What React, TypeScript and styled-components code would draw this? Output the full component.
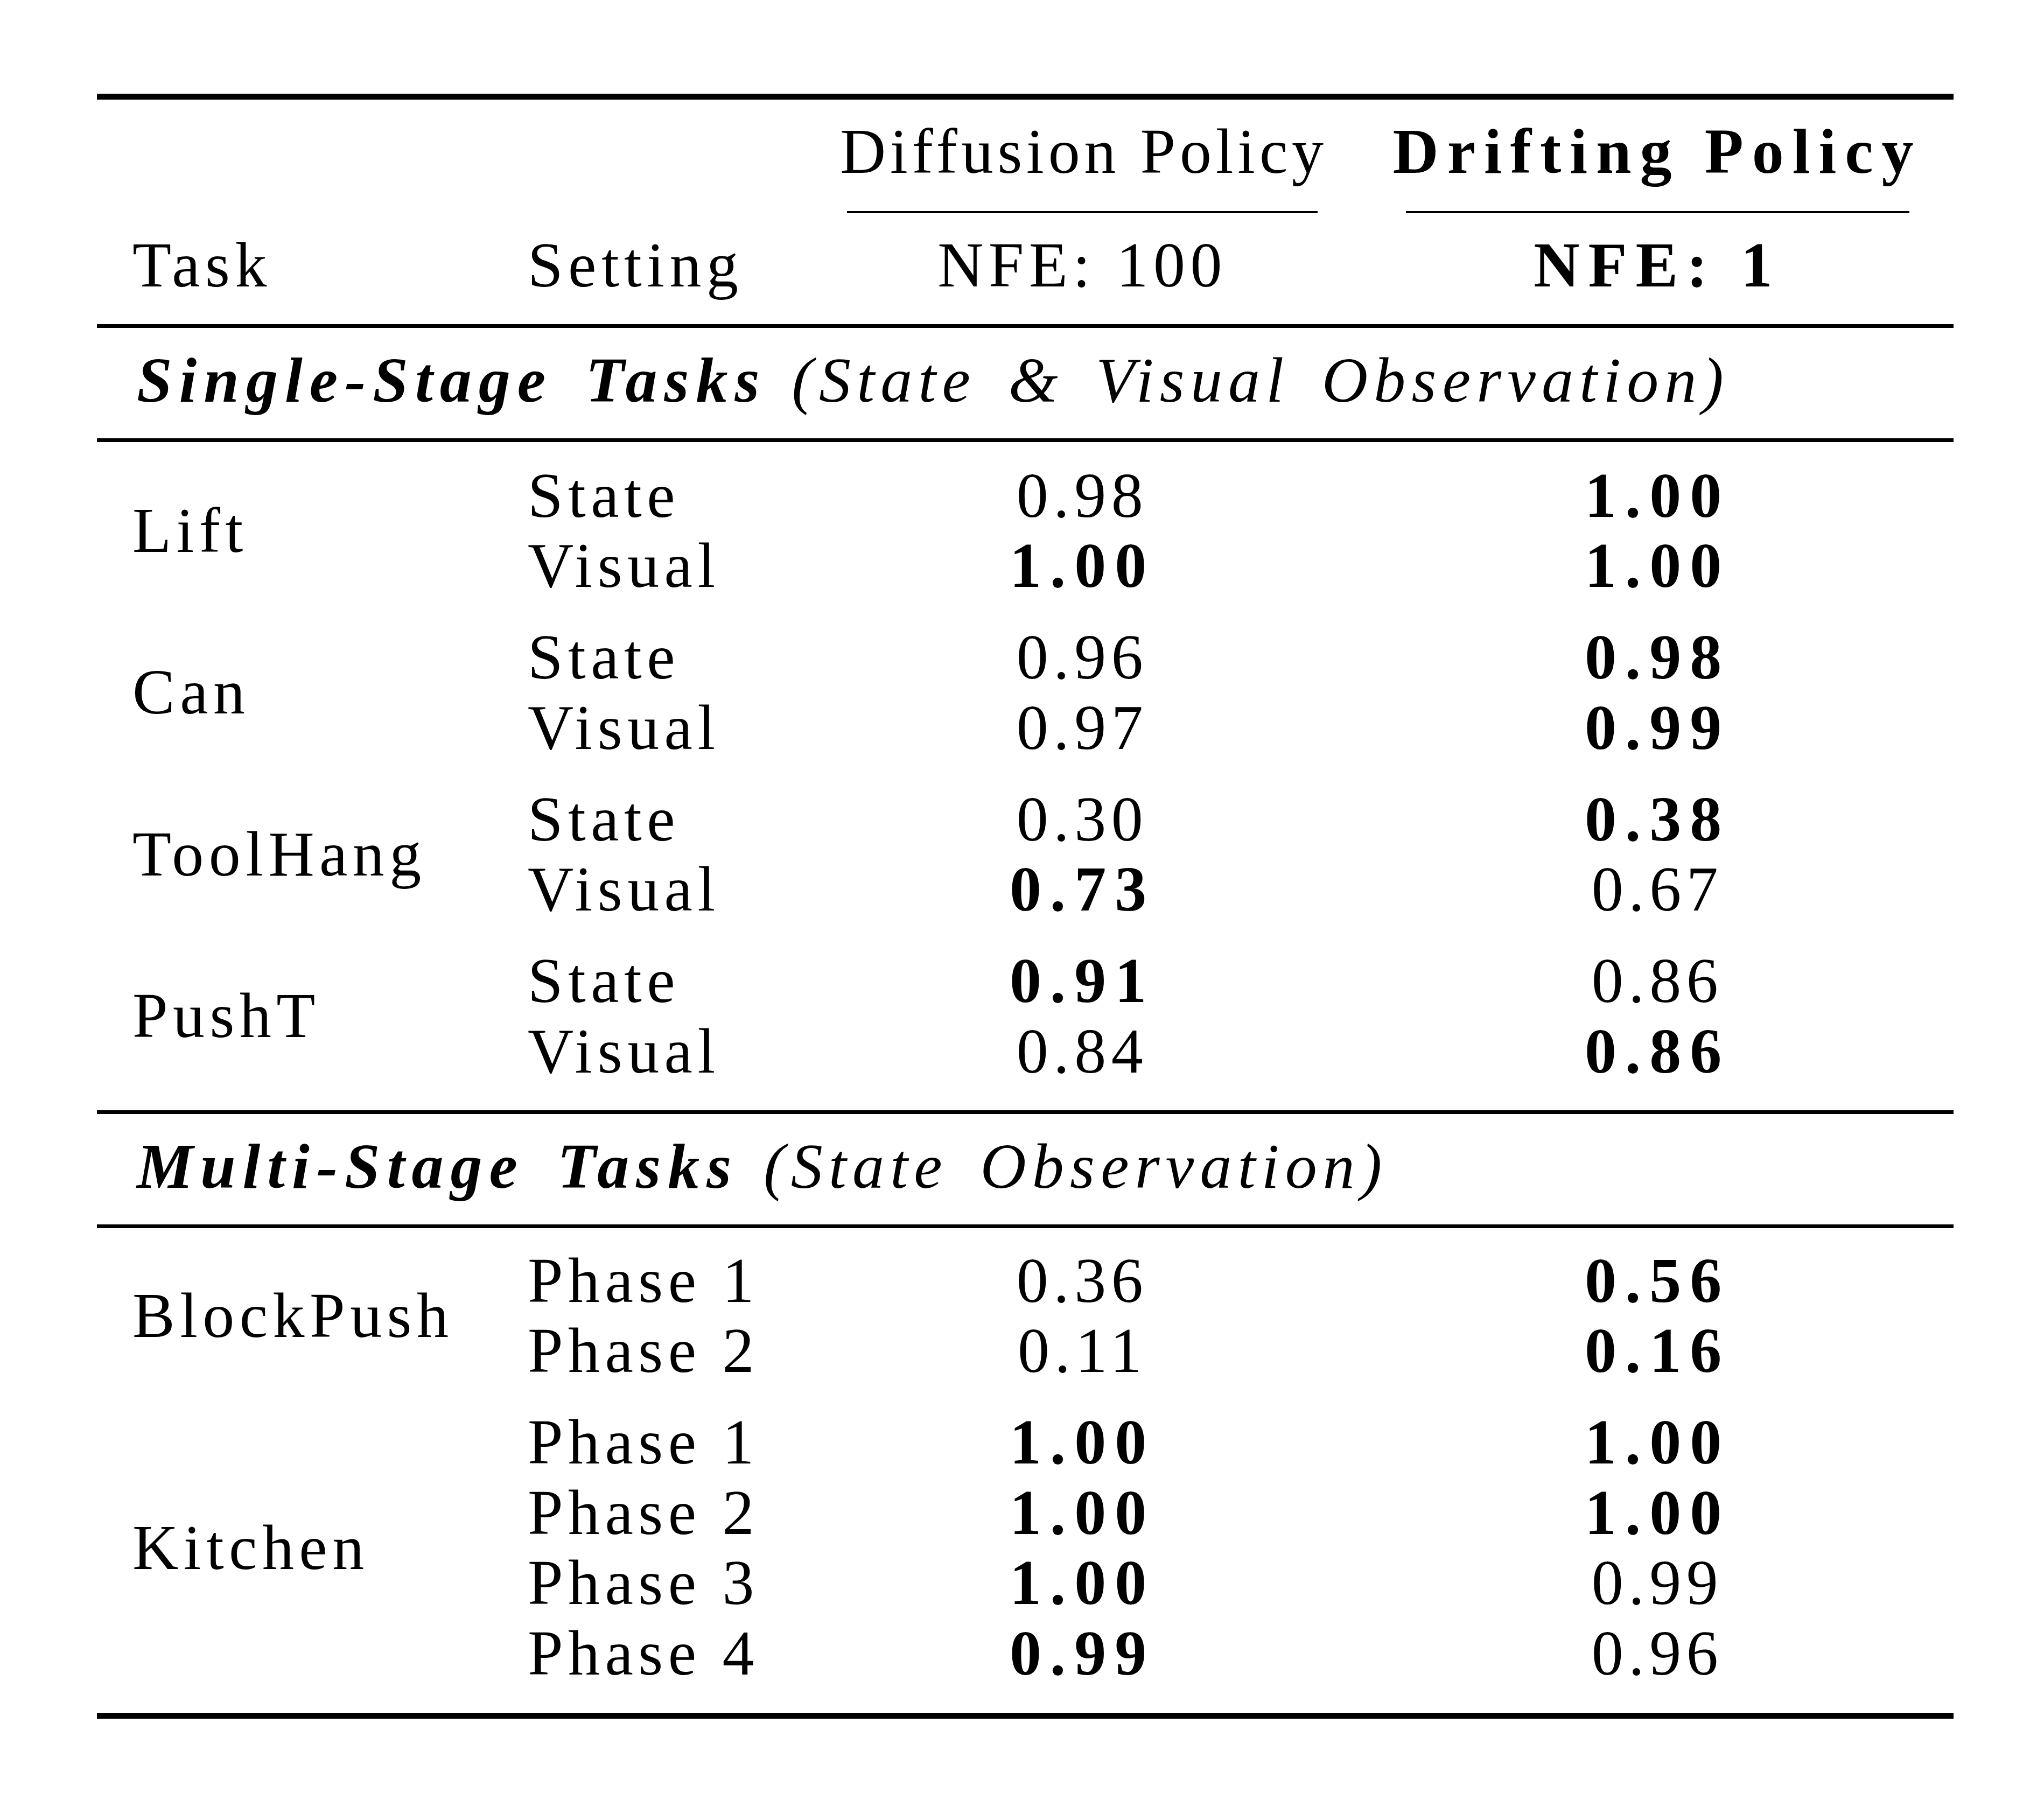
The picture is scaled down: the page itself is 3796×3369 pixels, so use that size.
import React from "react";
import styled, { createGlobalStyle } from "styled-components";

const GlobalStyle = createGlobalStyle`
  html, body {
    margin: 0;
    padding: 0;
    background: #ffffff;
  }
  body {
    font-family: "Liberation Serif", "Times New Roman", serif;
    color: #000000;
  }
`;

const Page = styled.div`
  width: 3796px;
  height: 3369px;
  box-sizing: border-box;
  padding: 174px 0 0 180px;
  background: #ffffff;
`;

const Table = styled.div`
  width: 3448px;
  font-size: 118px;
  line-height: 130.5px;
  letter-spacing: 0.08em;
`;

const Rule = styled.div<{ $heavy?: boolean }>`
  height: ${(p) => (p.$heavy ? 11 : 7)}px;
  background: #000000;
`;

const Block = styled.div<{ $top: number; $bottom: number }>`
  display: grid;
  grid-template-columns: 800px 580px 900px 1168px;
  grid-auto-rows: auto;
  padding: ${(p) => p.$top}px 0 ${(p) => p.$bottom}px;
`;

const Blank = styled.span``;

const TaskCell = styled.div<{ $rows: number }>`
  grid-column: 1;
  grid-row: span ${(p) => p.$rows};
  align-self: center;
  padding-left: 66px;
  white-space: nowrap;
`;

const SettingCell = styled.div`
  grid-column: 2;
  white-space: nowrap;
`;

const NumCell = styled.div<{ $bold?: boolean; $drift?: boolean }>`
  text-align: center;
  white-space: nowrap;
  padding-left: ${(p) => (p.$drift ? 68 : 0)}px;
  font-weight: ${(p) => (p.$bold ? 700 : 400)};
  letter-spacing: ${(p) => (p.$bold ? "0.135em" : "0.08em")};
`;

const HeadCell = styled(NumCell)`
  letter-spacing: ${(p) => (p.$bold ? "0.135em" : "0.066em")};
`;

const CMidRule = styled.div<{ $drift?: boolean }>`
  height: 4px;
  background: #000000;
  margin: 44px ${(p) => (p.$drift ? 82 : 13)}px 32px
    ${(p) => (p.$drift ? 151 : 13)}px;
`;

const GroupGap = styled.div`
  grid-column: 1 / -1;
  height: 39.5px;
`;

const SectionRow = styled.div`
  padding: 33px 0 41.5px 74px;
  white-space: nowrap;
  word-spacing: 0.16em;
`;

const SectionTitle = styled.span`
  font-style: italic;
  font-weight: 700;
  letter-spacing: 0.11em;
`;

const SectionNote = styled.span`
  font-style: italic;
  letter-spacing: 0.095em;
  margin-left: 0.4em;
`;

type Row = { setting: string; diffusion: string; drifting: string; best: "d" | "f" | "both" };
type Group = { task: string; rows: Row[] };

const single: Group[] = [
  {
    task: "Lift",
    rows: [
      { setting: "State", diffusion: "0.98", drifting: "1.00", best: "f" },
      { setting: "Visual", diffusion: "1.00", drifting: "1.00", best: "both" },
    ],
  },
  {
    task: "Can",
    rows: [
      { setting: "State", diffusion: "0.96", drifting: "0.98", best: "f" },
      { setting: "Visual", diffusion: "0.97", drifting: "0.99", best: "f" },
    ],
  },
  {
    task: "ToolHang",
    rows: [
      { setting: "State", diffusion: "0.30", drifting: "0.38", best: "f" },
      { setting: "Visual", diffusion: "0.73", drifting: "0.67", best: "d" },
    ],
  },
  {
    task: "PushT",
    rows: [
      { setting: "State", diffusion: "0.91", drifting: "0.86", best: "d" },
      { setting: "Visual", diffusion: "0.84", drifting: "0.86", best: "f" },
    ],
  },
];

const multi: Group[] = [
  {
    task: "BlockPush",
    rows: [
      { setting: "Phase 1", diffusion: "0.36", drifting: "0.56", best: "f" },
      { setting: "Phase 2", diffusion: "0.11", drifting: "0.16", best: "f" },
    ],
  },
  {
    task: "Kitchen",
    rows: [
      { setting: "Phase 1", diffusion: "1.00", drifting: "1.00", best: "both" },
      { setting: "Phase 2", diffusion: "1.00", drifting: "1.00", best: "both" },
      { setting: "Phase 3", diffusion: "1.00", drifting: "0.99", best: "d" },
      { setting: "Phase 4", diffusion: "0.99", drifting: "0.96", best: "d" },
    ],
  },
];

function Groups({ groups, top, bottom }: { groups: Group[]; top: number; bottom: number }) {
  return (
    <Block $top={top} $bottom={bottom}>
      {groups.map((g, gi) => (
        <React.Fragment key={g.task}>
          {gi > 0 && <GroupGap />}
          <TaskCell $rows={g.rows.length}>{g.task}</TaskCell>
          {g.rows.map((r) => (
            <React.Fragment key={r.setting}>
              <SettingCell>{r.setting}</SettingCell>
              <NumCell $bold={r.best !== "f"}>{r.diffusion}</NumCell>
              <NumCell $drift $bold={r.best !== "d"}>
                {r.drifting}
              </NumCell>
            </React.Fragment>
          ))}
        </React.Fragment>
      ))}
    </Block>
  );
}

export default function App() {
  return (
    <Page>
      <GlobalStyle />
      <Table>
        <Rule $heavy />
        <Block $top={32} $bottom={43.5}>
          <Blank />
          <Blank />
          <HeadCell>Diffusion Policy</HeadCell>
          <HeadCell $drift $bold>
            Drifting Policy
          </HeadCell>
          <Blank />
          <Blank />
          <CMidRule />
          <CMidRule $drift />
          <TaskCell $rows={1}>Task</TaskCell>
          <SettingCell>Setting</SettingCell>
          <NumCell>NFE: 100</NumCell>
          <NumCell $drift $bold>
            NFE: 1
          </NumCell>
        </Block>
        <Rule />
        <SectionRow>
          <SectionTitle>Single-Stage Tasks</SectionTitle>
          <SectionNote>(State &amp; Visual Observation)</SectionNote>
        </SectionRow>
        <Rule />
        <Groups groups={single} top={35} bottom={43.5} />
        <Rule />
        <SectionRow>
          <SectionTitle>Multi-Stage Tasks</SectionTitle>
          <SectionNote>(State Observation)</SectionNote>
        </SectionRow>
        <Rule />
        <Groups groups={multi} top={33} bottom={44.5} />
        <Rule $heavy />
      </Table>
    </Page>
  );
}
